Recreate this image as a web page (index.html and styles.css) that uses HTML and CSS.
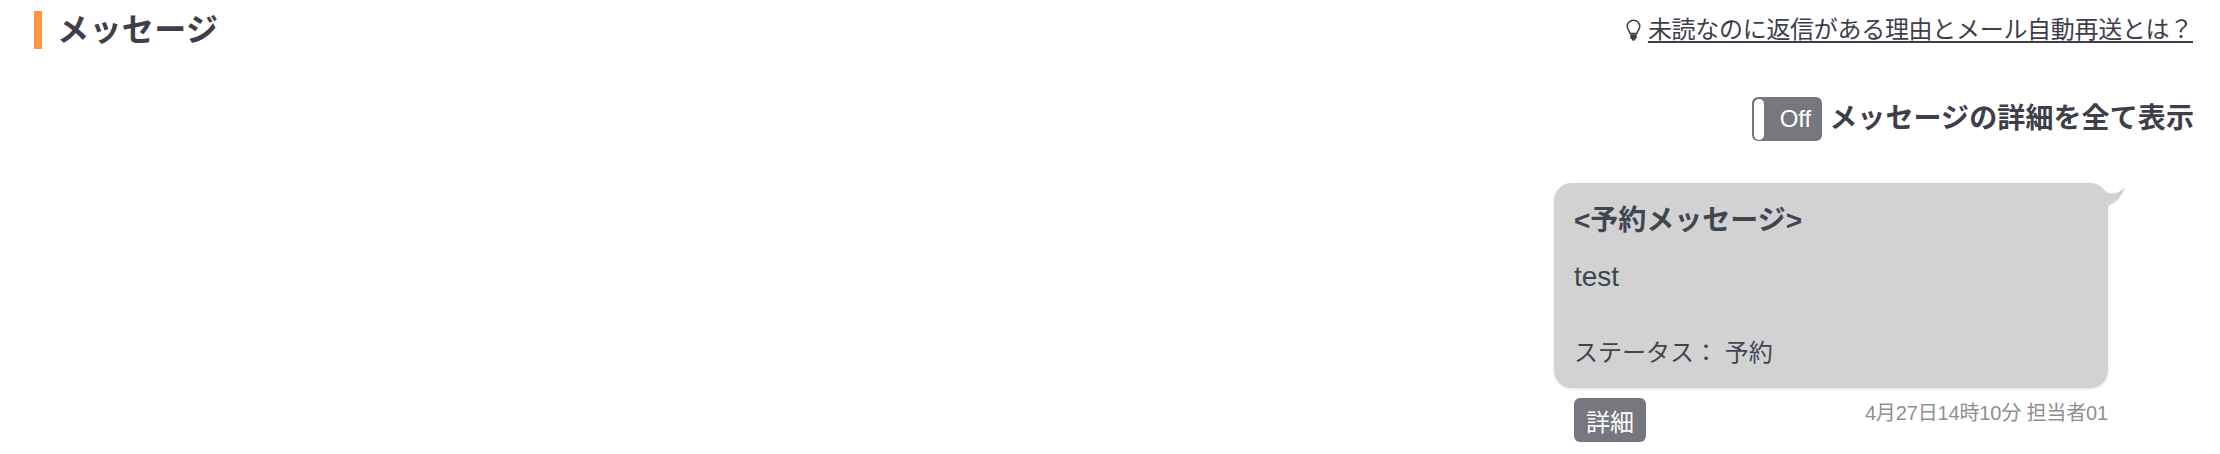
FILE: index.html
```html
<!DOCTYPE html>
<html lang="ja">
<head>
<meta charset="utf-8">
<title>メッセージ</title>
<link rel="stylesheet" href="styles.css">
</head>
<body>
<header class="head">
  <h2 class="title">メッセージ</h2>
  <a class="help" href="#">
    <svg class="bulb" viewBox="0 0 14 22" width="15" height="23" aria-hidden="true">
      <path d="M7 1.2C3.6 1.2 1 3.7 1 6.9c0 2.9 2.2 4.2 2.8 7h6.4c.6-2.8 2.8-4.1 2.8-7 0-3.2-2.6-5.7-6-5.7z" fill="none" stroke="#3f3d48" stroke-width="1.5"/>
      <path d="M3.9 14.6h6.2v3.2c0 .9-.8 1.4-1.5 1.5-.3 1-.9 1.6-1.6 1.6s-1.3-.6-1.6-1.6c-.7-.1-1.5-.6-1.5-1.5z" fill="#3f3d48"/>
    </svg>
    <span class="help-text">未読なのに返信がある理由とメール自動再送とは？</span>
  </a>
</header>
<div class="toggle-row">
  <div class="toggle"><span class="knob"></span><span class="off">Off</span></div>
  <span class="toggle-label">メッセージの詳細を全て表示</span>
</div>
<section class="msg">
  <div class="bubble">
    <svg class="tail" viewBox="0 0 20 24" width="20" height="24" aria-hidden="true">
      <path d="M0 6L3 8Q13 10 20 2 16 16 3 21L0 21z" fill="#d2d2d2"/>
    </svg>
    <p class="msg-title">&lt;予約メッセージ&gt;</p>
    <p class="msg-body">test</p>
    <p class="msg-status">ステータス： 予約</p>
  </div>
  <div class="meta">
    <button class="detail" type="button">詳細</button>
    <span class="stamp">4月27日14時10分 担当者01</span>
  </div>
</section>
</body>
</html>
```
FILE: styles.css
```css
* { box-sizing: border-box; }
html, body { margin: 0; padding: 0; }
body {
  width: 2220px;
  height: 454px;
  overflow: hidden;
  background: #fff;
  color: #403e4a;
  font-family: "Liberation Sans", "Noto Sans CJK JP", sans-serif;
}
.head {
  display: flex;
  justify-content: space-between;
  align-items: flex-start;
  padding: 11px 27px 0 34px;
}
.title {
  margin: 0;
  height: 38px;
  border-left: 8px solid #ff9346;
  padding-left: 15px;
  font-size: 32px;
  line-height: 38px;
  font-weight: 700;
  letter-spacing: .4px;
}
.help {
  display: flex;
  align-items: center;
  gap: 7px;
  height: 38px;
  color: #403e4a;
  text-decoration: none;
}
.bulb { display: block; }
.help-text {
  font-size: 24px;
  line-height: 30px;
  letter-spacing: -.3px;
  text-decoration: underline;
  text-underline-offset: 3px;
  text-decoration-thickness: 2px;
}
.toggle-row {
  display: flex;
  justify-content: flex-end;
  align-items: center;
  gap: 7px;
  margin-top: 48px;
  padding-right: 26px;
}
.toggle {
  display: flex;
  align-items: center;
  justify-content: flex-end;
  position: relative;
  width: 70px;
  height: 44px;
  padding-right: 11px;
  border-radius: 6px;
  background: #77777f;
  color: #fff;
  font-size: 24px;
}
.knob {
  position: absolute;
  left: 2px;
  top: 2px;
  bottom: 1px;
  width: 10px;
  border-radius: 5px;
  background: #fff;
}
.toggle-label {
  font-size: 28px;
  line-height: 44px;
  font-weight: 700;
  letter-spacing: .1px;
}
.msg {
  width: 554px;
  margin: 42px 112px 0 auto;
}
.bubble {
  position: relative;
  height: 205px;
  padding: 18px 20px 0;
  border-radius: 18px;
  background: #d2d2d2;
  color: #3f4652;
  box-shadow: 0 1px 3px rgba(0, 0, 0, .12);
}
.tail {
  position: absolute;
  top: 2px;
  right: -17px;
}
.msg-title {
  margin: 0;
  font-size: 28px;
  line-height: 40px;
  font-weight: 700;
}
.msg-body {
  margin: 16px 0 0;
  font-size: 28px;
  line-height: 40px;
}
.msg-status {
  margin: 39px 0 0;
  font-size: 24px;
  line-height: 34px;
}
.meta {
  display: flex;
  justify-content: space-between;
  align-items: flex-start;
  padding: 10px 0 0 20px;
}
.detail {
  width: 72px;
  height: 44px;
  padding: 0;
  border: 0;
  border-radius: 6px;
  background: #77777f;
  color: #fff;
  font: inherit;
  font-size: 24px;
}
.stamp {
  margin-top: 1px;
  color: #8f8f8f;
  font-size: 20px;
  line-height: 28px;
  letter-spacing: -.15px;
}
```
